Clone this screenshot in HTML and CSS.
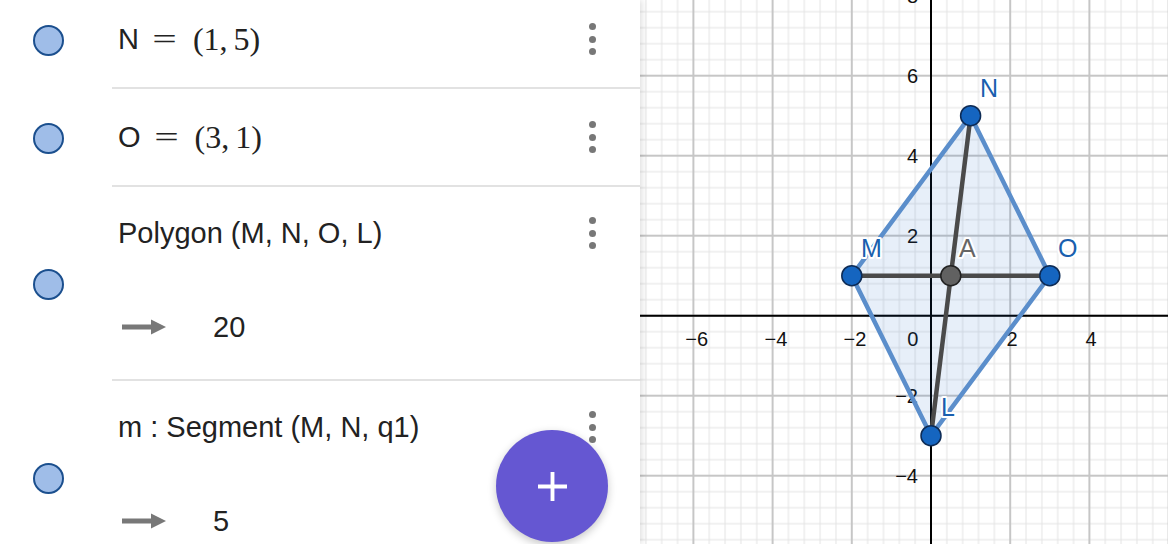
FILE: index.html
```html
<!DOCTYPE html>
<html lang="en">
<head>
<meta charset="utf-8">
<title>GeoGebra</title>
<link rel="stylesheet" href="styles.css">
</head>
<body>
<div class="app">
  <section class="algebra">
    <div class="list">
      <div class="row">
        <div class="marble-col"><span class="marble"></span></div>
        <div class="content">
          <div class="line">
            <span class="expr math"><span class="mi">N</span><span class="eq">=</span><span class="paren">(1,<span class="thin"></span>5)</span></span>
            <div class="kebab"><i></i><i></i><i></i></div>
          </div>
        </div>
      </div>
      <div class="row">
        <div class="marble-col"><span class="marble"></span></div>
        <div class="content">
          <div class="line">
            <span class="expr math"><span class="mi">O</span><span class="eq">=</span><span class="paren">(3,<span class="thin"></span>1)</span></span>
            <div class="kebab"><i></i><i></i><i></i></div>
          </div>
        </div>
      </div>
      <div class="row tall">
        <div class="marble-col"><span class="marble"></span></div>
        <div class="content">
          <div class="line first">
            <span class="expr">Polygon (M, N, O, L)</span>
            <div class="kebab"><i></i><i></i><i></i></div>
          </div>
          <div class="line output">
            <svg class="arrow" viewBox="0 0 44 16" aria-hidden="true"><rect x="0" y="5.5" width="31" height="5" fill="#787878"/><path d="M29 0.5L44 8L29 15.5Z" fill="#787878"/></svg>
            <span class="value">20</span>
          </div>
        </div>
      </div>
      <div class="row tall">
        <div class="marble-col"><span class="marble"></span></div>
        <div class="content">
          <div class="line first">
            <span class="expr">m : Segment (M, N, q1)</span>
            <div class="kebab"><i></i><i></i><i></i></div>
          </div>
          <div class="line output">
            <svg class="arrow" viewBox="0 0 44 16" aria-hidden="true"><rect x="0" y="5.5" width="31" height="5" fill="#787878"/><path d="M29 0.5L44 8L29 15.5Z" fill="#787878"/></svg>
            <span class="value">5</span>
          </div>
        </div>
      </div>
    </div>
    <button class="fab" aria-label="Add"><svg viewBox="0 0 30 30" width="30" height="30"><path d="M13 0h4v13h13v4H17v13h-4V17H0v-4h13z" fill="#fff"/></svg></button>
  </section>
  <section class="graph">
    <svg class="canvas" width="528" height="544" viewBox="0 0 528 544">
      <defs>
        <pattern id="grid" patternUnits="userSpaceOnUse" x="53.4" y="75.7" width="79.2" height="80">
          <path d="M15.84 0V80M31.68 0V80M47.52 0V80M63.36 0V80M0 16H79.2M0 32H79.2M0 48H79.2M0 64H79.2" stroke="#e3e3e3" stroke-width="1"/>
          <path d="M0 0V80M79.2 0V80M0 0H79.2M0 80H79.2" stroke="#c6c6c6" stroke-width="2"/>
        </pattern>
      </defs>
      <rect x="0" y="0" width="528" height="544" fill="url(#grid)"/>
      <path d="M0 315.7H528M291 0V544" stroke="#000" stroke-width="2"/>
      <g class="ticks">
        <text x="56.7" y="346" text-anchor="middle">−6</text>
        <text x="136" y="346" text-anchor="middle">−4</text>
        <text x="215" y="346" text-anchor="middle">−2</text>
        <text x="272.7" y="346" text-anchor="middle">0</text>
        <text x="372" y="346" text-anchor="middle">2</text>
        <text x="451" y="346" text-anchor="middle">4</text>
        <text x="278" y="3" text-anchor="end">8</text>
        <text x="278" y="83" text-anchor="end">6</text>
        <text x="278" y="163" text-anchor="end">4</text>
        <text x="278" y="243" text-anchor="end">2</text>
        <text x="278" y="403" text-anchor="end">−2</text>
        <text x="278" y="483" text-anchor="end">−4</text>
      </g>
      <polygon points="211.8,275.7 330.6,115.7 409.8,275.7 291,435.7" fill="rgba(21,101,192,0.1)" stroke="#5b8ecb" stroke-width="4.5" stroke-linejoin="round"/>
      <path d="M211.8 275.7H409.8M330.6 115.7L291 435.7" stroke="#4a4a4a" stroke-width="4.5" stroke-linecap="round"/>
      <g class="labels">
        <text x="340" y="97" class="blue">N</text>
        <text x="221" y="257" class="blue">M</text>
        <text x="319" y="257" class="grey">A</text>
        <text x="418" y="257" class="blue">O</text>
        <text x="301" y="416" class="blue">L</text>
      </g>
      <g class="points">
        <circle cx="330.6" cy="115.7" r="10"/>
        <circle cx="211.8" cy="275.7" r="10"/>
        <circle cx="409.8" cy="275.7" r="10"/>
        <circle cx="291" cy="435.7" r="10"/>
        <circle cx="310.8" cy="275.7" r="10" class="gpt"/>
      </g>
    </svg>
  </section>
</div>
</body>
</html>
```

FILE: styles.css
```css
* { box-sizing: border-box; margin: 0; padding: 0; }
html, body { width: 1168px; height: 544px; overflow: hidden; background: #fff; }
body { font-family: "Liberation Sans", Arial, sans-serif; color: #222; }

.app { display: flex; height: 544px; }

.algebra {
  position: relative;
  z-index: 1;
  width: 640px;
  flex: none;
  height: 544px;
  overflow: hidden;
  background: #fff;
  box-shadow: 2px 0 6px rgba(0, 0, 0, 0.13);
}

.list { margin-top: -9px; }

.row { display: flex; }

.marble-col {
  width: 112px;
  flex: none;
  display: flex;
  align-items: center;
  padding-left: 33px;
}

.marble {
  width: 31px;
  height: 31px;
  border-radius: 50%;
  background: #9fbde8;
  border: 2px solid #1b4f8e;
}

.content {
  flex: 1;
  padding-left: 6px;
  border-bottom: 2px solid #e2e2e2;
}

.row.tall .content { padding-bottom: 4px; }

.line {
  display: flex;
  align-items: center;
  height: 96px;
  padding-right: 36px;
}

.row.tall .line.first { height: 92px; }

.expr { font-size: 29px; white-space: nowrap; }

.math { display: flex; align-items: center; }
.mi { font-family: "Liberation Sans", Arial, sans-serif; }
.eq {
  display: inline-block;
  font-family: "Liberation Serif", serif;
  font-size: 30px;
  margin-left: 17px;
  margin-right: 20px;
  transform: scaleX(1.45);
}
.paren { font-family: "Liberation Serif", serif; font-size: 32px; }
.thin { display: inline-block; width: 6px; }

.kebab {
  margin-left: auto;
  width: 24px;
  display: flex;
  flex-direction: column;
  align-items: center;
  gap: 5.5px;
}
.kebab i { display: block; width: 7px; height: 7px; border-radius: 50%; background: #777; }

.arrow { display: block; width: 44px; height: 16px; margin-left: 4px; }
.value { font-size: 29px; margin-left: 47px; }

.fab {
  position: absolute;
  left: 496px;
  top: 430px;
  width: 112px;
  height: 112px;
  border: none;
  border-radius: 50%;
  background: #6557d2;
  box-shadow: 0 3px 8px rgba(0, 0, 0, 0.22);
  display: flex;
  align-items: center;
  justify-content: center;
}
.fab svg { display: block; width: 29px; height: 29px; }

.graph { position: relative; flex: 1; height: 544px; overflow: hidden; background: #fff; }
.canvas { display: block; }

.ticks text { font-family: "Liberation Sans", Arial, sans-serif; font-size: 20px; fill: #111; }

.labels text {
  font-family: "Liberation Sans", Arial, sans-serif;
  font-size: 25px;
  paint-order: stroke;
  stroke: #fff;
  stroke-width: 4px;
  stroke-linejoin: round;
}
.labels .blue { fill: #1a5fae; }
.labels .grey { fill: #666; }

.points circle { fill: #1565c0; stroke: #0d2b55; stroke-width: 1.5; }
.points circle.gpt { fill: #616161; stroke: #222; }
```
